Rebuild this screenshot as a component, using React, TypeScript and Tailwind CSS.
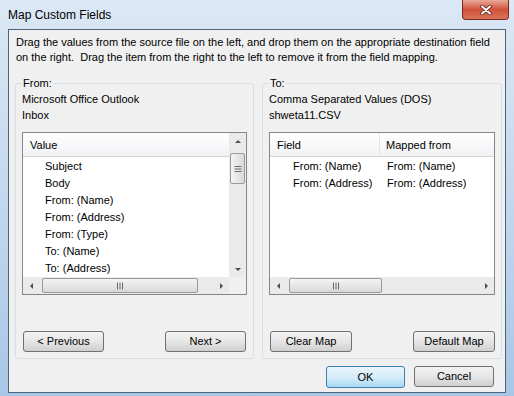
import React from "react";

const ui = "font-['Liberation_Sans','Arial',sans-serif]";

const Arrow = ({ dir }: { dir: "up" | "down" | "left" | "right" }) => {
  const pts = {
    up: "1,5 4,2 7,5",
    down: "1,3 4,6 7,3",
    left: "5,1 2,4 5,7",
    right: "3,1 6,4 3,7",
  }[dir];
  return (
    <svg width="8" height="8" viewBox="0 0 8 8">
      <polygon points={pts} fill="#4d4d4d" />
    </svg>
  );
};

const Grip = ({ vertical }: { vertical?: boolean }) => (
  <svg width="8" height="8" viewBox="0 0 8 8">
    {vertical
      ? [1, 3.5, 6].map((y) => <rect key={y} x="0.5" y={y} width="7" height="1" fill="#6a6a6a" />)
      : [1, 3.5, 6].map((x) => <rect key={x} x={x} y="0.5" width="1" height="7" fill="#6a6a6a" />)}
  </svg>
);

const HScroll = ({ thumbLeft, thumbWidth }: { thumbLeft: number; thumbWidth: number }) => (
  <div className="flex h-[17px] flex-1 items-center bg-[#eaeaea]">
    <div className="flex h-[17px] w-[17px] items-center justify-center">
      <Arrow dir="left" />
    </div>
    <div className="relative h-[17px] flex-1">
      <div
        className="absolute top-[1px] flex h-[15px] items-center justify-center rounded-[2px] border border-[#9a9a9a] bg-gradient-to-b from-[#f4f4f4] to-[#d9d9d9]"
        style={{ left: thumbLeft, width: thumbWidth }}
      >
        <Grip />
      </div>
    </div>
    <div className="flex h-[17px] w-[17px] items-center justify-center">
      <Arrow dir="right" />
    </div>
  </div>
);

const VScroll = () => (
  <div className="flex w-[17px] flex-col bg-[#eaeaea]">
    <div className="flex h-[17px] items-center justify-center">
      <Arrow dir="up" />
    </div>
    <div className="flex-1 px-[1px] pt-[3px]">
      <div className="flex h-[31px] items-center justify-center rounded-[2px] border border-[#9a9a9a] bg-gradient-to-r from-[#f4f4f4] to-[#d9d9d9]">
        <Grip vertical />
      </div>
    </div>
    <div className="flex h-[17px] items-center justify-center">
      <Arrow dir="down" />
    </div>
  </div>
);

const Button = ({ label, w, primary }: { label: string; w: string; primary?: boolean }) => (
  <button
    className={`${w} rounded-[3px] border text-[11px] leading-none text-black ${
      primary
        ? "h-[22px] border-[#3c7fb1] bg-gradient-to-b from-[#e9f5fc] via-[#d6ecf8] to-[#a9d9f2]"
        : "h-[21px] border-[#707070] bg-gradient-to-b from-[#f2f2f2] via-[#e6e6e6] to-[#cfcfcf]"
    }`}
  >
    {label}
  </button>
);

const Header = ({ children }: { children: React.ReactNode }) => (
  <div className="flex h-[24px] border-b border-[#d5d5d5] bg-gradient-to-b from-white to-[#f1f2f4]">
    {children}
  </div>
);

const sourceRows = [
  "Subject",
  "Body",
  "From: (Name)",
  "From: (Address)",
  "From: (Type)",
  "To: (Name)",
  "To: (Address)",
];

const mappedRows = [
  ["From: (Name)", "From: (Name)"],
  ["From: (Address)", "From: (Address)"],
];

const GroupBox = ({
  legend,
  lines,
  children,
  w,
}: {
  legend: string;
  lines: string[];
  children: React.ReactNode;
  w: string;
}) => (
  <fieldset className={`${w} rounded-[3px] border border-[#d5dfe5] px-[6px] pb-[6px]`}>
    <legend className="px-[1px] leading-[16px]">{legend}</legend>
    {lines.map((l) => (
      <div key={l} className="leading-[16px]">
        {l}
      </div>
    ))}
    {children}
  </fieldset>
);

export default function App() {
  return (
    <div
      className={`${ui} flex h-[396px] w-[514px] flex-col overflow-hidden bg-gradient-to-b from-[#dbe8f5] via-[#c3d8ee] to-[#a9c6e6] text-[11px] text-black`}
    >
      {/* title bar */}
      <div className="flex h-[29px] items-start justify-between pr-[5px]">
        <div className="pl-[8px] pt-[7px] text-[12px] leading-[16px]">Map Custom Fields</div>
        <div className="flex h-[20px] w-[47px] items-center justify-center rounded-b-[4px] border border-t-0 border-[#7a2a1e] bg-gradient-to-b from-[#e9a99a] via-[#cf4f37] to-[#d9735c]">
          <svg width="12" height="10" viewBox="0 0 12 10">
            <path d="M2 1.5 L10 8.5 M10 1.5 L2 8.5" stroke="#5b1f16" strokeWidth="3.6" strokeLinecap="round" />
            <path d="M2 1.5 L10 8.5 M10 1.5 L2 8.5" stroke="white" strokeWidth="2" strokeLinecap="round" />
          </svg>
        </div>
      </div>

      {/* client area */}
      <div className="mx-[8px] flex h-[364px] flex-col border border-[#4f6378] bg-[#f0f0f0]">
        <p className="pl-[7px] pt-[5px] leading-[15px]">
          Drag the values from the source file on the left, and drop them on the appropriate destination field
          <br />
          on the right.&nbsp; Drag the item from the right to the left to remove it from the field mapping.
        </p>

        <div className="mt-[10px] flex gap-[8px] pl-[6px]">
          <GroupBox legend="From:" lines={["Microsoft Office Outlook", "Inbox"]} w="w-[239px]">
            <div className="mt-[9px] flex h-[163px] flex-col border border-[#828790] bg-white">
              <div className="flex flex-1">
                <div className="flex-1">
                  <Header>
                    <div className="pl-[7px] leading-[24px]">Value</div>
                  </Header>
                  <div className="pt-[1px]">
                    {sourceRows.map((r) => (
                      <div key={r} className="pl-[22px] leading-[17px]">
                        {r}
                      </div>
                    ))}
                  </div>
                </div>
                <VScroll />
              </div>
              <div className="flex">
                <HScroll thumbLeft={2} thumbWidth={156} />
                <div className="h-[17px] w-[17px] bg-[#f0f0f0]" />
              </div>
            </div>
            <div className="mt-[36px] flex justify-between px-[1px]">
              <Button label="< Previous" w="w-[81px]" />
              <Button label="Next >" w="w-[81px]" />
            </div>
          </GroupBox>

          <GroupBox legend="To:" lines={["Comma Separated Values (DOS)", "shweta11.CSV"]} w="w-[240px]">
            <div className="mt-[9px] flex h-[163px] flex-col border border-[#828790] bg-white">
              <div className="flex-1">
                <Header>
                  <div className="w-[110px] border-r border-[#e3e4e6] pl-[7px] leading-[24px]">Field</div>
                  <div className="pl-[6px] leading-[24px]">Mapped from</div>
                </Header>
                <div className="pt-[1px]">
                  {mappedRows.map(([a, b]) => (
                    <div key={a} className="flex leading-[17px]">
                      <div className="w-[111px] pl-[23px]">{a}</div>
                      <div className="pl-[6px]">{b}</div>
                    </div>
                  ))}
                </div>
              </div>
              <div className="flex">
                <HScroll thumbLeft={2} thumbWidth={93} />
              </div>
            </div>
            <div className="mt-[36px] flex justify-between pl-[1px]">
              <Button label="Clear Map" w="w-[82px]" />
              <Button label="Default Map" w="w-[82px]" />
            </div>
          </GroupBox>
        </div>

        <div className="mt-[7px] flex justify-end gap-[9px] pr-[11px]">
          <Button label="OK" w="w-[79px]" primary />
          <Button label="Cancel" w="w-[80px]" primary={false} />
        </div>
      </div>
    </div>
  );
}
